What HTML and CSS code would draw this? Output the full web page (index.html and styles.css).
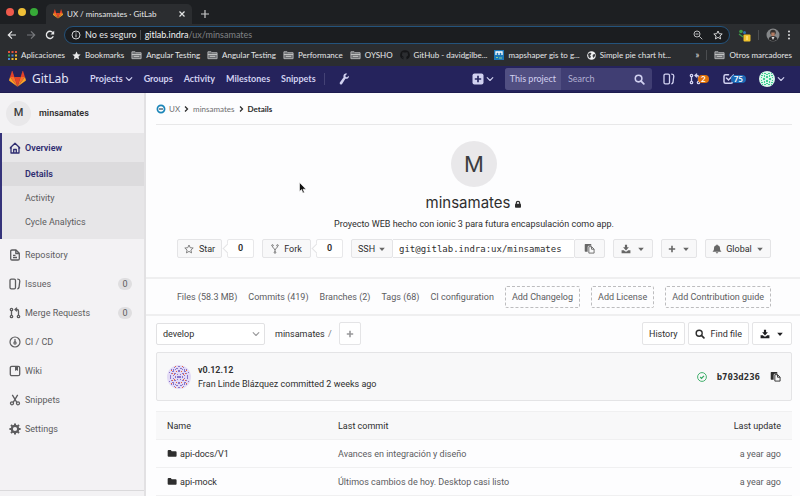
FILE: index.html
```html
<!DOCTYPE html>
<html lang="es">
<head>
<meta charset="utf-8">
<title>UX / minsamates · GitLab</title>
<link rel="stylesheet" href="styles.css">
</head>
<body>
<svg class="defs" width="0" height="0" aria-hidden="true">
  <defs>
    <symbol id="tanuki" viewBox="0 0 36 34">
      <path fill="#e24329" d="M18 33.5 11.4 13h13.2z"/>
      <path fill="#fc6d26" d="M18 33.5 11.4 13H2.1z"/>
      <path fill="#fca326" d="M2.1 13 .1 19.2c-.2.6 0 1.200.5 1.500L18 33.500z"/>
      <path fill="#e24329" d="M2.100 13h9.300l-4-12.400c-.2-.6-1.100-.6-1.300 0z"/>
      <path fill="#fc6d26" d="M18 33.500 24.600 13h9.300z"/>
      <path fill="#fca326" d="m33.900 13 2 6.200c.2.6 0 1.200-.5 1.500L18 33.500z"/>
      <path fill="#e24329" d="M33.900 13h-9.300l4-12.400c.2-.6 1.100-.6 1.300 0z"/>
    </symbol>
    <symbol id="folder-line" viewBox="0 0 12 10">
      <path fill="#6d6f72" stroke="#b4b5b7" d="M1 1.500h3.500l1 1H11V9H1z"/>
      <path stroke="#c9cacb" d="M1 4.500h10M3 6.500h6"/>
    </symbol>
    <symbol id="chevron" viewBox="0 0 8 8"><path fill="none" stroke="currentColor" stroke-width="1.100" stroke-linecap="round" stroke-linejoin="round" d="m1.200 2.700 2.800 2.800 2.800-2.800"/></symbol>
    <symbol id="caret" viewBox="0 0 8 8"><path fill="currentColor" d="M1.200 2.700h5.600L4 5.900z"/></symbol>
    <symbol id="search" viewBox="0 0 12 12"><circle cx="5" cy="5" r="3.600" fill="none" stroke="currentColor" stroke-width="1.700"/><path stroke="currentColor" stroke-width="2" stroke-linecap="round" d="m8 8 2.700 2.700"/></symbol>
    <symbol id="issues" viewBox="0 0 12 12"><g fill="none" stroke="currentColor" stroke-width="1.300" stroke-linejoin="round"><rect x="1" y="1.200" width="5.500" height="9.600" rx="1.300"/><path d="M8.300 1.200h.5c1.300.1 2 .8 2 1.900L10 9.500c-.2.900-.7 1.300-1.700 1.300"/></g></symbol>
    <symbol id="merge" viewBox="0 0 12 12"><g fill="none" stroke="currentColor" stroke-width="1.300"><path d="M2.500 4v4M6.500 2.500H8c1 0 1.500.5 1.500 1.500v4M8 .6 6 2.500l2 1.900"/><circle cx="2.500" cy="2.500" r="1.200"/><circle cx="2.500" cy="9.500" r="1.200"/><circle cx="9.500" cy="9.500" r="1.200"/></g></symbol>
    <symbol id="copy" viewBox="0 0 12 12"><path fill="currentColor" d="M1.500 1h5.800c.5 0 .7.300.7.700V3H5.500C4.600 3 4 3.600 4 4.500V9.500H1.500c-.5 0-.7-.3-.7-.7V1.700c0-.4.3-.7.700-.7z"/><path fill="none" stroke="currentColor" d="M5.300 4h3L11 6.700V11H5.300zM8.200 4v2.800H11"/></symbol>
    <symbol id="download" viewBox="0 0 12 12"><path fill="currentColor" d="M4.700 1h2.600v3h2.200L6 7.700 2.500 4h2.200zM.7 7.500h2.800L5 9h2l1.500-1.500h2.800V11H.7z"/></symbol>
    <symbol id="plus" viewBox="0 0 10 10"><path stroke="currentColor" stroke-width="2" d="M5 1v8M1 5h8"/></symbol>
    <symbol id="folder" viewBox="0 0 12 10"><path fill="currentColor" d="M2 .8h2.500l1.200 1.500h4.600c.8 0 1.200.5 1.200 1.200v4.300c0 .8-.5 1.200-1.200 1.200H2C1.200 9 .8 8.600.8 7.800V2C.8 1.200 1.200.8 2 .8z"/></symbol>
    <g id="quad">
      <path fill="#8a76c9" d="M0 0h2v1H0zM1 2h1v1H1zM3 0h1v1H3zM3 3h2v1H3zM0 5h1v2H0zM5 5h1v2H5zM7 3h1v1H7zM3 7h1v1H3zM7 7h1v1H7zM5 1h1v1H5zM1 8h2v1H1zM8 0h1v2H8zM6 5h1v1H6zM9 4h1v1H9zM0 10h1v1H0zM4 9h1v1H4zM5 7h1v1H5z"/>
      <path fill="#f0663c" d="M4 2h1v1H4zM2 5h1v1H2zM6 3h1v1H6zM7 6h1v1H7zM3 10h1v1H3z"/>
    </g>
    <g id="quad-green"><path fill="#3fcf92" d="M0 1h1v2H0zM2 0h2v1H2zM2 2h1v2H2zM4 3h2v1H4zM5 1h1v1H5zM1 5h2v1H1zM4 5h1v1H4zM0 4h1v1H0z"/></g>
  </defs>
</svg>

<header class="browser">
  <div class="tabs">
    <div class="lights"><i class="red"></i><i class="yellow"></i><i class="green"></i></div>
    <div class="tab">
      <svg width="10" height="10"><use href="#tanuki"/></svg>
      <span class="tab-title">UX / minsamates · GitLab</span>
      <button class="bare" aria-label="Cerrar"><svg width="8" height="8" viewBox="0 0 8 8"><path stroke="#e4e5e6" stroke-width="1.200" d="m1.500 1.500 5 5m0-5-5 5"/></svg></button>
    </div>
    <button class="bare new-tab" aria-label="Nueva pestaña"><svg width="10" height="10" viewBox="0 0 10 10"><path stroke="#c8c9ca" stroke-width="1.200" d="M5 1v8M1 5h8"/></svg></button>
  </div>
  <div class="toolbar">
    <div class="history">
      <button class="bare" aria-label="Atrás"><svg width="10" height="10" viewBox="0 0 10 10"><path fill="none" stroke="#e8e9ea" stroke-width="1.200" d="M9 5H1.500M5 1.300 1.300 5 5 8.700"/></svg></button>
      <button class="bare" aria-label="Adelante"><svg width="10" height="10" viewBox="0 0 10 10"><path fill="none" stroke="#77797c" stroke-width="1.200" d="M1 5h7.500M5 1.300 8.700 5 5 8.700"/></svg></button>
      <button class="bare" aria-label="Recargar"><svg width="10" height="10" viewBox="0 0 10 10"><path fill="none" stroke="#e8e9ea" stroke-width="1.300" d="M8.300 6.300A3.600 3.600 0 1 1 7.800 2.600"/><path fill="#e8e9ea" d="M9.200.7v3.700H5.500z"/></svg></button>
    </div>
    <div class="omnibox">
      <svg width="10" height="10" viewBox="0 0 10 10"><circle cx="5" cy="5" r="4" fill="none" stroke="#d4d5d6"/><path stroke="#d4d5d6" d="M5 4.300v3M5 2.500v1"/></svg>
      <span class="secure">No es seguro</span>
      <span class="bar"></span>
      <label for="url">gitlab.indra</label><input id="url" value="/ux/minsamates">
      <svg width="10" height="10" viewBox="0 0 10 10"><g fill="none" stroke="#b9babc"><circle cx="4" cy="4" r="3"/><path d="m6.300 6.300 3 3M2.500 4h3"/></g></svg>
      <svg class="fav" width="10" height="10" viewBox="0 0 10 10"><path fill="none" stroke="#d4d5d6" d="m5 1 1.200 2.700 3 .3-2.300 2 .7 2.900L5 7.400 2.400 8.900 3.100 6 .8 4l3-.3z"/></svg>
    </div>
    <svg class="ext" width="14" height="14" viewBox="0 0 14 14"><circle cx="4" cy="3.500" r="1.800" fill="#3d9c46"/><circle cx="7.500" cy="4.500" r="1.500" fill="#2c6fb0"/><path fill="none" stroke="#3d9c46" stroke-width="1.300" d="m2 6 4 3"/><rect x="6.500" y="6.500" width="7" height="7" rx="1" fill="#f0c22c"/><path stroke="#fff3b0" d="M10 8v4"/></svg>
    <span class="bar"></span>
    <svg class="me" width="14" height="14" viewBox="0 0 14 14"><circle cx="7" cy="7" r="6.500" fill="#858789"/><circle cx="7" cy="4.500" r="2.800" fill="#35302e"/><path fill="#b37b62" d="M5.300 4.500h3.400v3L7 8.800 5.300 7.500z"/><path fill="#29292b" d="M2.500 11.500C3 8.800 5 8.300 7 8.300s4 .5 4.500 3.200L7 13.500z"/><path fill="#ddd" d="m5.500 9 1.500 3 1.500-3z"/></svg>
    <button class="bare" aria-label="Menú"><svg width="4" height="10" viewBox="0 0 4 10"><g fill="#dcddde"><circle cx="2" cy="1.500" r="1"/><circle cx="2" cy="5" r="1"/><circle cx="2" cy="8.500" r="1"/></g></svg></button>
  </div>
  <nav class="bookmarks">
    <a href="#"><svg width="9" height="9" viewBox="0 0 9 9"><path fill="#e5533d" d="M0 0h2v2H0zM3.500 0h2v2h-2zM7 0h2v2H7z"/><path fill="#43a35a" d="M0 3.500h2v2H0z"/><path fill="#4387d9" d="M3.500 3.500h2v2h-2zM0 7h2v2H0z"/><path fill="#e9b832" d="M7 3.500h2v2H7zM3.500 7h2v2h-2zM7 7h2v2H7z"/></svg>Aplicaciones</a>
    <a href="#"><svg width="9" height="9" viewBox="0 0 10 10"><path fill="#e8e9ea" d="m5 .5 1.400 3 3.200.4-2.400 2.200.7 3.300L5 7.800 2.100 9.400l.7-3.300L.4 3.900l3.200-.4z"/></svg>Bookmarks</a>
    <a href="#"><svg width="11" height="10"><use href="#folder-line"/></svg>Angular Testing</a>
    <a href="#"><svg width="11" height="10"><use href="#folder-line"/></svg>Angular Testing</a>
    <a href="#"><svg width="11" height="10"><use href="#folder-line"/></svg>Performance</a>
    <a href="#"><svg width="11" height="10"><use href="#folder-line"/></svg>OYSHO</a>
    <a href="#"><svg width="10" height="10" viewBox="0 0 10 10"><path fill="#151618" d="M5 .3a4.700 4.700 0 0 0-1.500 9.200V8.300c-1 .1-1.400-.4-1.700-1 .7-.1.900.5 1.700.4 0-.4.200-.7.400-.8C2.500 6.700 2 6 2 4.600c0-.6.200-1 .5-1.400-.1-.4 0-.8.100-1.200.5 0 .9.300 1.300.5a5 5 0 0 1 2.200 0c.4-.2.800-.5 1.300-.5.1.4.200.8.100 1.200.3.400.5.800.5 1.400 0 1.400-.6 2.100-1.900 2.300.3.300.4.600.4 1v1.600A4.700 4.700 0 0 0 5 .3z"/></svg>GitHub - davidgilbe...</a>
    <a href="#"><svg width="10" height="10" viewBox="0 0 10 10"><rect width="10" height="10" fill="#1b77b8"/><path fill="none" stroke="#fff" stroke-width="1.300" d="M2 5V2h6v3M5 2v3"/><path stroke="#8fd08a" d="M2 7.500h2M5 8h3"/></svg>mapshaper gis to g...</a>
    <a href="#"><svg width="9" height="9" viewBox="0 0 9 9"><circle cx="4.500" cy="4.500" r="4.300" fill="#f1f2f3"/><path fill="#3b3d40" d="m1 3 2-1.500 1.500 1L3 4.500l1 1-1 2L1.500 6zM6 3.500l2-.5.300 1.500L6.500 7 5.500 5z"/></svg>Simple pie chart ht...</a>
    <button class="bare more" aria-label="Más marcadores">»</button>
    <span class="bar"></span>
    <a href="#"><svg width="11" height="10"><use href="#folder-line"/></svg>Otros marcadores</a>
  </nav>
</header>

<header class="navbar">
  <a class="brand" href="#"><svg width="17" height="16"><use href="#tanuki"/></svg><span>GitLab</span></a>
  <nav class="menu">
    <a href="#">Projects <svg width="8" height="8"><use href="#chevron"/></svg></a>
    <a href="#">Groups</a>
    <a href="#">Activity</a>
    <a href="#">Milestones</a>
    <a href="#">Snippets</a>
  </nav>
  <a class="wrench" href="#" aria-label="Admin"><svg width="11" height="12" viewBox="0 0 11 12"><path fill="currentColor" d="M9.800 2.700 8 4.300l-1.300-.4-.3-1.300L8.200.8C6.800.3 5 .8 4.500 2.400c-.2.700-.1 1.300.1 1.900L1 9.300c-.5.700-.4 1.500.2 2 .6.400 1.400.3 1.900-.4l3.300-5.200c1.500.4 4-.4 3.400-3z"/></svg></a>
  <button class="bare create" aria-label="New"><svg width="12" height="12" viewBox="0 0 12 12"><rect x=".5" y=".5" width="11" height="11" rx="2" fill="currentColor"/><path stroke="#292961" stroke-width="1.700" d="M6 2.800v6.400M2.800 6h6.400"/></svg><svg width="8" height="8"><use href="#chevron"/></svg></button>
  <form class="search">
    <span class="scope">This project</span>
    <input type="search" placeholder="Search" aria-label="Search">
    <svg width="11" height="11"><use href="#search"/></svg>
  </form>
  <nav class="counters">
    <a href="#" aria-label="Issues"><svg width="12" height="12"><use href="#issues"/></svg></a>
    <a href="#" aria-label="Merge requests"><svg width="12" height="12"><use href="#merge"/></svg><span class="pill orange">2</span></a>
    <a href="#" aria-label="Todos"><svg width="11" height="12" viewBox="0 0 11 12"><path fill="none" stroke="currentColor" stroke-width="1.500" stroke-linecap="round" d="M5.500 1.800H2.500Q1 1.800 1 3.300v5.500q0 1.500 1.500 1.500h5.500q1.500 0 1.500-1.500V7.500M3.500 5l2 2 5-5"/></svg><span class="pill blue">75</span></a>
  </nav>
  <button class="bare user" aria-label="User"><svg width="16" height="16" viewBox="0 0 16 16"><circle cx="8" cy="8" r="8" fill="#d9f7ea"/><g transform="translate(8 8)"><use href="#quad-green"/><use href="#quad-green" transform="scale(-1 1)"/><use href="#quad-green" transform="scale(1 -1)"/><use href="#quad-green" transform="scale(-1 -1)"/></g></svg><svg width="8" height="8"><use href="#chevron"/></svg></button>
</header>

<div class="page">
  <aside class="sidebar">
    <a class="context" href="#"><span class="avatar small">M</span>minsamates</a>
    <div class="section">
      <a class="item" href="#"><svg width="12" height="12" viewBox="0 0 12 12"><g fill="none" stroke="currentColor" stroke-width="1.300" stroke-linejoin="round"><path d="M1 6 6 1.300 11 6M2 5.500V11h8V5.500M.800 6h2M9.200 6h2M4.700 11V7.500h2.600V11"/></g></svg>Overview</a>
      <a class="sub current" href="#">Details</a>
      <a class="sub" href="#">Activity</a>
      <a class="sub" href="#">Cycle Analytics</a>
    </div>
    <nav class="items">
      <a class="item" href="#"><svg width="12" height="12" viewBox="0 0 12 12"><g fill="none" stroke="currentColor" stroke-width="1.300" stroke-linejoin="round"><path d="M7 1H3Q1.700 1 1.700 2.300v7.400Q1.700 11 3 11h6q1.300 0 1.300-1.300V4.300zM6.800 1v3.500h3.500M4 6.300h2.500M4 8.500h4"/></g></svg>Repository</a>
      <a class="item" href="#"><svg width="12" height="12"><use href="#issues"/></svg>Issues<span class="count">0</span></a>
      <a class="item" href="#"><svg width="12" height="12"><use href="#merge"/></svg>Merge Requests<span class="count">0</span></a>
      <a class="item" href="#"><svg width="12" height="12" viewBox="0 0 12 12"><g fill="none" stroke="currentColor" stroke-width="1.200"><circle cx="6" cy="6" r="5"/><circle cx="6" cy="7" r="1.100"/><path d="M6 3v3"/></g></svg>CI / CD</a>
      <a class="item" href="#"><svg width="12" height="12" viewBox="0 0 12 12"><rect x="1.300" y="1.300" width="9.400" height="9.400" rx="1.500" fill="none" stroke="currentColor" stroke-width="1.300"/><path fill="currentColor" d="M6 1h3v5L7.500 5 6 6z"/></svg>Wiki</a>
      <a class="item" href="#"><svg width="12" height="12" viewBox="0 0 12 12"><g fill="none" stroke="currentColor" stroke-width="1.300"><path d="m3.300.8 4.500 7.500M8.700.8 4.200 8.300"/><circle cx="3" cy="9.300" r="1.500"/><circle cx="9" cy="9.300" r="1.500"/></g></svg>Snippets</a>
      <a class="item" href="#"><svg width="12" height="12" viewBox="0 0 12 12"><circle cx="6" cy="6" r="3.200" fill="none" stroke="currentColor" stroke-width="2.200"/><path stroke="currentColor" stroke-width="2" d="M6 .4v2M6 9.600v2M.4 6h2M9.600 6h2M2 2l1.400 1.400M8.600 8.600 10 10M2 10l1.400-1.400M8.600 3.400 10 2"/></svg>Settings</a>
    </nav>
    <div class="collapse"></div>
  </aside>

  <main class="content">
    <nav class="crumbs">
      <a href="#"><svg width="10" height="10" viewBox="0 0 10 10"><circle cx="5" cy="5" r="3.600" fill="#fff" stroke="#1b85b8" stroke-width="1.700"/><path stroke="#3b5266" stroke-width="1.300" d="M3 5h4"/></svg>UX</a>
      <svg width="5" height="8" viewBox="0 0 5 8"><path fill="none" stroke="#2e2e2e" stroke-width="1.300" d="m1 1.500 2.500 2.500L1 6.500"/></svg>
      <a href="#">minsamates</a>
      <svg width="5" height="8" viewBox="0 0 5 8"><path fill="none" stroke="#2e2e2e" stroke-width="1.300" d="m1 1.500 2.500 2.500L1 6.500"/></svg>
      <strong>Details</strong>
    </nav>

    <section class="home">
      <div class="avatar large">M</div>
      <h1>minsamates <svg width="8" height="9" viewBox="0 0 8 9"><path fill="none" stroke="#2e2e2e" stroke-width="1.200" d="M2.300 5V4a1.700 1.700 0 0 1 3.400 0v1"/><rect x="1" y="4.800" width="6" height="4" rx=".8" fill="#2e2e2e"/></svg></h1>
      <p>Proyecto WEB hecho con ionic 3 para futura encapsulación como app.</p>
      <div class="actions">
        <div class="counted">
          <button class="btn star"><svg width="10" height="10" viewBox="0 0 10 10"><path fill="none" stroke="#777" stroke-width=".9" d="m5 1 1.200 2.700 3 .3-2.300 2 .7 2.900L5 7.400 2.400 8.900 3.100 6 .8 4l3-.3z"/></svg>Star</button>
          <span class="tally">0</span>
        </div>
        <div class="counted">
          <button class="btn fork"><svg width="8" height="10" viewBox="0 0 8 10"><g fill="none" stroke="#777" stroke-width="1"><path d="M1.500 2.500c0 2 2.500 1.700 2.500 3.500M6.500 2.500C6.500 4.500 4 4.200 4 6v2"/><circle cx="1.500" cy="1.500" r=".8"/><circle cx="6.500" cy="1.500" r=".8"/><circle cx="4" cy="8.500" r=".8"/></g></svg>Fork</button>
          <span class="tally">0</span>
        </div>
        <div class="clone">
          <button class="btn ssh">SSH<svg width="8" height="8"><use href="#caret"/></svg></button>
          <input value="git@gitlab.indra:ux/minsamates" aria-label="Project clone URL" readonly>
          <button class="btn clip" aria-label="Copy URL"><svg width="11" height="11"><use href="#copy"/></svg></button>
        </div>
        <button class="btn dl" aria-label="Download"><svg width="10" height="10"><use href="#download"/></svg><svg width="8" height="8"><use href="#caret"/></svg></button>
        <button class="btn add" aria-label="Add"><svg width="8" height="8"><use href="#plus"/></svg><svg width="8" height="8"><use href="#caret"/></svg></button>
        <button class="btn bell"><svg width="10" height="10" viewBox="0 0 10 10"><path fill="#666" d="M5 .5c.5 0 .7.300.7.700C7.300 1.500 8 2.800 8 4.200c0 1.800.5 2.500 1.500 3.500H.5C1.500 6.700 2 6 2 4.200c0-1.400.7-2.700 2.300-3 0-.4.200-.7.700-.7zM3.800 8.300h2.400C6.200 9 5.700 9.500 5 9.500S3.800 9 3.800 8.300z"/></svg>Global<svg width="8" height="8"><use href="#caret"/></svg></button>
      </div>
    </section>

    <nav class="stats">
      <a href="#">Files (58.3 MB)</a>
      <a href="#">Commits (419)</a>
      <a href="#">Branches (2)</a>
      <a href="#">Tags (68)</a>
      <a href="#">CI configuration</a>
      <a class="dashed" href="#">Add Changelog</a>
      <a class="dashed" href="#">Add License</a>
      <a class="dashed" href="#">Add Contribution guide</a>
    </nav>

    <section class="tree">
      <div class="tree-bar">
        <div class="branch"><select aria-label="Branch"><option>develop</option></select><svg width="8" height="8"><use href="#chevron"/></svg></div>
        <div class="path"><a href="#">minsamates</a> <span>/</span></div>
        <button class="btn white square" aria-label="Add to tree"><svg width="8" height="8"><use href="#plus"/></svg></button>
        <div class="tools">
          <a class="btn white" href="#">History</a>
          <a class="btn white find" href="#"><svg width="10" height="10"><use href="#search"/></svg>Find file</a>
          <button class="btn white dl" aria-label="Download"><svg width="10" height="10"><use href="#download"/></svg><svg width="8" height="8"><use href="#caret"/></svg></button>
        </div>
      </div>

      <div class="commit">
        <svg width="24" height="24" viewBox="0 0 24 24"><circle cx="12" cy="12" r="12" fill="#e3dbf5"/><g transform="translate(12 12)"><use href="#quad"/><use href="#quad" transform="scale(-1 1)"/><use href="#quad" transform="scale(1 -1)"/><use href="#quad" transform="scale(-1 -1)"/></g></svg>
        <div class="who"><a class="title" href="#">v0.12.12</a><span>Fran Linde Blázquez committed 2 weeks ago</span></div>
        <svg class="passed" width="10" height="10" viewBox="0 0 10 10"><g fill="none" stroke="#31a960"><circle cx="5" cy="5" r="4.400" stroke-width=".9"/><path stroke-width="1.200" d="m3.200 5 1.300 1.300L7 3.900"/></g></svg>
        <a class="sha" href="#">b703d236</a>
        <button class="bare copy" aria-label="Copy SHA"><svg width="11" height="11"><use href="#copy"/></svg></button>
      </div>

      <table>
        <thead><tr><th>Name</th><th>Last commit</th><th>Last update</th></tr></thead>
        <tbody>
          <tr><td><a href="#"><svg width="10" height="9"><use href="#folder"/></svg>api-docs/V1</a></td><td>Avances en integración y diseño</td><td>a year ago</td></tr>
          <tr><td><a href="#"><svg width="10" height="9"><use href="#folder"/></svg>api-mock</a></td><td>Últimos cambios de hoy. Desktop casi listo</td><td>a year ago</td></tr>
        </tbody>
      </table>
    </section>
  </main>
</div>

<svg class="cursor" width="8" height="12" viewBox="0 0 8 12" aria-hidden="true"><path fill="#111" stroke="#fff" stroke-width=".6" d="M.5.5v9l2-1.900 1.400 3.400 1.500-.6L4 7.200h3z"/></svg>
</body>
</html>
```

FILE: styles.css
```css
* { box-sizing: border-box; }

body {
  margin: 0;
  height: 100vh;
  display: flex;
  flex-direction: column;
  overflow: hidden;
  font: 9px/14px Roboto, "Liberation Sans", sans-serif;
  color: #2e2e2e;
  background: #fdfdfe;
}

a { color: inherit; text-decoration: none; }
svg { display: block; flex: none; }
button, input, select { font: inherit; color: inherit; margin: 0; }
input { min-width: 0; border: 0; outline: 0; background: none; padding: 0; }
.defs { position: absolute; }
.bare { display: flex; align-items: center; padding: 0; border: 0; background: none; }
.bar { width: 1px; height: 10px; background: #4b4d50; flex: none; }

/* Browser window */
.browser { background: #2b2d30; color: #e6e7e8; font-family: Lato, sans-serif; font-size: 8px; }
.tabs { display: flex; align-items: flex-end; height: 24px; background: #1d1f22; }
.lights { display: flex; align-items: center; gap: 4px; height: 24px; padding: 0 8px 0 6px; }
.lights i { width: 8px; height: 8px; border-radius: 4px; }
.red { background: #ee5a4c; }
.yellow { background: #eebf37; }
.green { background: #37aa38; }
.tab { display: flex; align-items: center; gap: 4px; width: 146px; height: 20px; padding: 0 6px 0 7px; border-radius: 5px 5px 0 0; background: #2b2d30; }
.tab-title { flex: 1; white-space: nowrap; }
.new-tab { height: 20px; margin-left: 8px; }
.toolbar { display: flex; align-items: center; gap: 7px; height: 22px; padding: 0 9px 0 7px; }
.history { display: flex; gap: 9px; padding-right: 2px; }
.omnibox { display: flex; align-items: center; flex: 1; height: 18px; padding: 0 6px; border: 1px solid #24537c; border-radius: 9px; background: #1b1d20; font-size: 9px; }
.omnibox .bar { margin: 0 4px 0 3px; }
.omnibox .fav { margin-left: 10px; }
.secure { margin-left: 4px; }
.omnibox label { color: #f2f3f3; }
.omnibox input { flex: 1; color: #808285; }
.bookmarks { display: flex; align-items: center; height: 20px; padding: 0 8px 2px 8px; gap: 7px; white-space: nowrap; }
.bookmarks a { display: flex; align-items: center; gap: 4px; }
.more { margin-left: auto; font-size: 9px; }

/* GitLab navbar */
.navbar { display: flex; align-items: center; height: 27px; padding: 0 15px 0 9px; background: #25235c; color: #d1d1f0; border-bottom: 1px solid #1e1c50; font-family: Lato, sans-serif; }
.brand { display: flex; align-items: center; gap: 6px; width: 81px; font-family: "Noto Sans", sans-serif; font-size: 12px; color: #e3e3f8; }
.menu { display: flex; gap: 11px; font-weight: 700; }
.menu a { display: flex; align-items: center; gap: 2px; }
.wrench { margin-left: 8px; padding-left: 14px; border-left: 1px solid #444275; }
.create { gap: 2px; margin-left: auto; color: #d1d1f0; }
.search { display: flex; align-items: center; width: 147px; height: 22px; margin: 0 11px; padding-right: 7px; border-radius: 3px; background: #403e73; overflow: hidden; }
.scope { padding: 4px 5px; background: #514f82; white-space: nowrap; }
.search input { flex: 1; padding-left: 7px; appearance: none; }
.search input::placeholder { color: #b0afd2; opacity: 1; }
.counters { display: flex; gap: 14px; margin-right: 13px; }
.counters a { display: flex; align-items: center; }
.pill { min-width: 11px; margin-left: -3px; padding: 0 3px; border-radius: 4px; font-size: 8px; line-height: 8px; font-weight: 700; color: #fff; text-align: center; }
.orange { background: #e0700a; }
.blue { background: #1b69b6; }
.user { gap: 2px; color: #d1d1f0; }

/* Sidebar */
.page { display: flex; flex: 1; min-height: 0; }
.sidebar { display: flex; flex-direction: column; flex: 0 0 146px; background: #f3f2f4; border-right: 2px solid #e2e1e3; color: #5c5c5e; }
.context { display: flex; align-items: center; gap: 8px; height: 40px; padding-left: 6px; font-weight: 600; color: #2e2e2e; }
.avatar { display: flex; align-items: center; justify-content: center; border-radius: 50%; background: #e9e8ea; color: #3c3c3e; }
.small { width: 25px; height: 25px; font-size: 11px; font-weight: 500; }
.section { padding-bottom: 5px; border-left: 2px solid #35337a; background: #e7e6e8; }
.item { display: flex; align-items: center; gap: 4px; height: 29px; padding: 0 12px 0 9px; }
.section .item { padding-left: 7px; font-weight: 600; color: #2f2d70; }
.sub { display: block; padding: 5px 0 5px 23px; }
.current { background: #dcdbdd; font-weight: 600; color: #2f2d70; }
.items { margin-top: 1px; }
.count { margin-left: auto; width: 14px; border-radius: 6px; background: #dfdee0; line-height: 12px; text-align: center; }
.collapse { margin-top: auto; height: 6px; border-top: 1px solid #dad9db; }

/* Project page */
.content { flex: 1; min-width: 0; }
.crumbs { display: flex; align-items: center; gap: 4px; height: 32px; margin: 0 8px 0 10px; border-bottom: 1px solid #e8e8e9; font: 8px/14px Lato, sans-serif; color: #6d6d6f; }
.crumbs a { display: flex; align-items: center; gap: 3px; }
.crumbs strong { font-weight: 700; color: #2e2e2e; }
.home { display: flex; flex-direction: column; align-items: center; height: 154px; padding: 16px 8px 0 10px; border-bottom: 2px solid #efeff0; }
.large { width: 46px; height: 46px; font: 22px Inter, sans-serif; }
h1 { display: flex; align-items: center; gap: 4px; margin: 6px 0 4px; font: 15px/20px Inter, sans-serif; }
.home p { margin: 0 0 8px; }
.actions { display: flex; gap: 8px; }
.counted { display: flex; gap: 5px; }
.btn { display: flex; align-items: center; justify-content: center; gap: 5px; height: 19px; padding: 0 6px; border: 1px solid #e4e4e6; border-radius: 2px; background: #f8f8f9; white-space: nowrap; }
.tally { position: relative; width: 27px; border: 1px solid #e8e8ea; border-radius: 2px; background: #fff; line-height: 17px; font-weight: 600; text-align: center; }
.tally::before { content: ""; position: absolute; left: -4px; top: 5px; width: 6px; height: 6px; border: solid #e4e4e6; border-width: 0 0 1px 1px; background: #fff; transform: rotate(45deg); }
.star { width: 45px; }
.fork { width: 49px; }
.clone { display: flex; }
.clone input { width: 181px; padding: 0 6px; border: solid #e4e4e6; border-width: 1px 0; background: #fff; font: 9px "DejaVu Sans Mono", monospace; }
.ssh { width: 42px; gap: 3px; }
.ssh svg, .bell svg:last-child { color: #666; }
.clip { width: 31px; color: #666; }
.dl { width: 40px; gap: 6px; color: #666; }
.add { width: 36px; gap: 6px; color: #666; }
.bell { width: 66px; gap: 4px; }
.stats { display: flex; align-items: center; justify-content: center; gap: 11px; height: 37px; padding: 0 8px 0 10px; border-bottom: 2px solid #efeff0; color: #5c5c5e; white-space: nowrap; }
.dashed { padding: 3px 6px; border: 1px dashed #bdbdbf; border-radius: 2px; }
.tree { padding: 6px 8px 0 10px; }
.tree-bar { display: flex; align-items: center; gap: 7px; }
.branch { display: grid; align-items: center; width: 109px; margin-right: 3px; }
.branch select { grid-area: 1 / 1; height: 22px; padding: 0 6px; border: 1px solid #e1e1e3; border-radius: 2px; background: #fff; appearance: none; }
.branch svg { grid-area: 1 / 1; justify-self: end; margin-right: 5px; color: #99999b; pointer-events: none; }
.path span { margin-left: 1px; color: #77777a; }
.white { height: 23px; background: #fff; }
.white.dl { color: #1f1f21; }
.square { width: 22px; color: #99999b; }
.tools { display: flex; gap: 3px; margin-left: auto; }
.find { gap: 6px; }
.commit { display: flex; align-items: center; height: 49px; margin: 7px 0 10px; padding: 0 10px; border: 1px solid #e4e4e6; border-radius: 2px; background: #f8f8f9; }
.who { display: flex; flex-direction: column; flex: 1; margin-left: 7px; }
.title { font-weight: 600; }
.sha { margin: 0 10px; font: bold 9px "DejaVu Sans Mono", monospace; }
table { width: 100%; border-collapse: collapse; table-layout: fixed; }
th, td { height: 28px; padding: 0 11px; border-bottom: 1px solid #f0f0f1; font-weight: 400; text-align: left; }
th { border-top: 1px solid #f0f0f1; background: #f8f8f9; }
th:first-child { width: 171px; }
th:last-child, td:last-child { width: 90px; text-align: right; }
td { color: #5c5c5e; }
td a { display: flex; align-items: center; gap: 3px; color: #2e2e2e; }

.cursor { position: absolute; left: 299px; top: 182px; }
```
